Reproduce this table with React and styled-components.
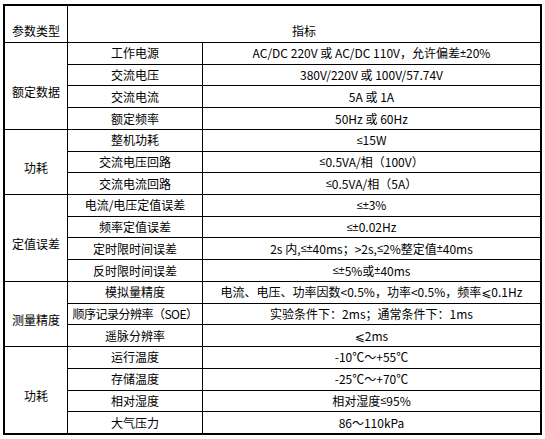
import React from "react";
import styled, { createGlobalStyle } from "styled-components";

const GlobalStyle = createGlobalStyle`
  html, body {
    margin: 0;
    padding: 0;
    background: #fff;
  }
  body {
    font-family: "Noto Sans CJK SC", "Liberation Sans", "DejaVu Sans", sans-serif;
    color: #000;
  }
`;

const Page = styled.div`
  padding: 4px 0 0 3px;
`;

const Sheet = styled.div`
  display: grid;
  grid-template-columns: 62px 134px 337px;
  grid-template-rows: 36px repeat(18, 1fr);
  gap: 1px;
  width: 539px;
  height: 431px;
  box-sizing: border-box;
  border: 2px solid #000;
  background: #000;
`;

const Cell = styled.div`
  background: #fff;
  display: flex;
  align-items: center;
  justify-content: center;
  font-size: 12px;
  line-height: 1;
  white-space: nowrap;
  box-sizing: border-box;
`;

const HeadCell = styled(Cell)`
  grid-column: span ${(p) => p.$span || 1};
  align-items: flex-end;
  padding-bottom: 5px;
`;

const GroupCell = styled(Cell)`
  grid-column: 1;
  grid-row: span ${(p) => p.$rows};
  padding-top: 12px;
`;

const Label = styled(Cell)`
  grid-column: 2;
  letter-spacing: ${(p) => (p.$tight ? "-0.5px" : "0")};
`;

const Value = styled(Cell)`
  grid-column: 3;
`;

// narrow latin glyphs for ± and ≤, as in the source sheet
const Sym = styled.span`
  font-family: "Liberation Sans", sans-serif;
  font-size: 11px;
`;

function withSymbols(text) {
  return text.split(/([±≤])/).map((part, i) =>
    part === "±" || part === "≤" ? <Sym key={i}>{part}</Sym> : part
  );
}

const groups = [
  {
    name: "额定数据",
    rows: [
      ["工作电源", "AC/DC 220V 或 AC/DC 110V，允许偏差±20%"],
      ["交流电压", "380V/220V 或 100V/57.74V"],
      ["交流电流", "5A 或 1A"],
      ["额定频率", "50Hz 或 60Hz"],
    ],
  },
  {
    name: "功耗",
    rows: [
      ["整机功耗", "≤15W"],
      ["交流电压回路", "≤0.5VA/相（100V）"],
      ["交流电流回路", "≤0.5VA/相（5A）"],
    ],
  },
  {
    name: "定值误差",
    rows: [
      ["电流/电压定值误差", "≤±3%"],
      ["频率定值误差", "≤±0.02Hz"],
      ["定时限时间误差", "2s 内, ≤±40ms；>2s, ≤2%整定值±40ms"],
      ["反时限时间误差", "≤±5%或±40ms"],
    ],
  },
  {
    name: "测量精度",
    rows: [
      ["模拟量精度", "电流、电压、功率因数<0.5%，功率<0.5%，频率⩽0.1Hz"],
      ["顺序记录分辨率（SOE）", "实验条件下：2ms；通常条件下：1ms", true],
      ["遥脉分辨率", "⩽2ms"],
    ],
  },
  {
    name: "功耗",
    rows: [
      ["运行温度", "-10℃～+55℃"],
      ["存储温度", "-25℃～+70℃"],
      ["相对湿度", "相对湿度≤95%"],
      ["大气压力", "86～110kPa"],
    ],
  },
];

export default function App() {
  return (
    <Page>
      <GlobalStyle />
      <Sheet>
        <HeadCell>参数类型</HeadCell>
        <HeadCell $span={2}>指标</HeadCell>
        {groups.map((g, gi) => (
          <React.Fragment key={gi}>
            <GroupCell $rows={g.rows.length}>{g.name}</GroupCell>
            {g.rows.map(([label, value, tight], ri) => (
              <React.Fragment key={ri}>
                <Label $tight={tight}>{label}</Label>
                <Value>{withSymbols(value)}</Value>
              </React.Fragment>
            ))}
          </React.Fragment>
        ))}
      </Sheet>
    </Page>
  );
}
